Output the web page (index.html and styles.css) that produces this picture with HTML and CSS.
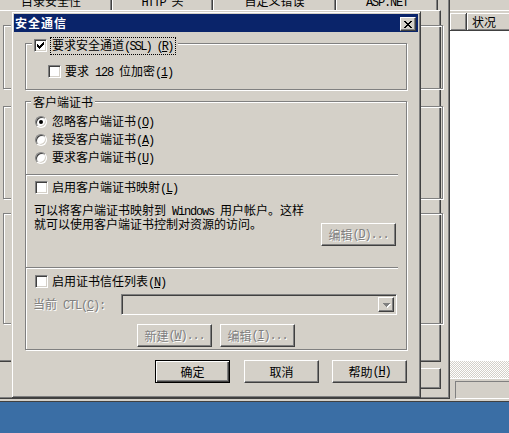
FILE: index.html
```html
<!DOCTYPE html>
<html lang="zh-CN">
<head>
  <meta charset="UTF-8">
  <title>安全通信</title>
  <link rel="stylesheet" href="styles.css">
</head>
<body>
<div class="desktop">

  <!-- IIS manager window behind -->
  <div class="mmc">
    <div class="mmc-pane">
      <div class="mmc-top"></div>
      <div class="lv-head">
        <div class="lv-col first"></div>
        <div class="lv-col state">状况</div>
      </div>
      <div class="lv-body"></div>
      <div class="lv-hatch"></div>
      <div class="statusbar">
        <div class="sb-panel"></div>
      </div>
    </div>
  </div>

  <!-- property sheet behind -->
  <div class="sheet">
    <div class="tabs">
      <div class="tab t1">目录安全性</div>
      <div class="tab t2"><span class="lat">HTTP </span>头</div>
      <div class="tab t3">自定义错误</div>
      <div class="tab t4"><span class="lat">ASP.NET</span></div>
    </div>
    <div class="page">
      <div class="pgroup pg1"></div>
      <div class="pgroup pg2"></div>
      <div class="pgroup pg3"></div>
    </div>
    <div class="sheet-btns">
      <div class="btn small">应用</div>
    </div>
  </div>

  <!-- Secure communications dialog -->
  <div class="dialog">
    <div class="titlebar">
      <span class="title">安全通信</span>
      <div class="close">
        <svg width="8" height="7" viewBox="0 0 8 7" shape-rendering="crispEdges"><path d="M0 0h2v1H0zM6 0h2v1H6zM1 1h2v1H1zM5 1h2v1H5zM2 2h4v1H2zM3 3h2v1H3zM2 4h4v1H2zM1 5h2v1H1zM5 5h2v1H5zM0 6h2v1H0zM6 6h2v1H6z" fill="#000"/></svg>
      </div>
    </div>

    <div class="dlg-body">
      <div class="group g-ssl">
        <div class="legend">
          <span class="cb">
            <svg width="7" height="7" viewBox="0 0 7 7" shape-rendering="crispEdges"><path d="M6 0h1v1H6zM5 1h2v1H5zM0 2h1v1H0zM4 2h3v1H4zM0 3h2v1H0zM3 3h3v1H3zM0 4h5v1H0zM1 5h3v1H1zM2 6h1v1H2z" fill="#000"/></svg>
          </span>
          <span class="focus">要求安全通道<span class="lat tight">(SSL) (<u>R</u>)</span></span>
        </div>
        <div class="row r128">
          <span class="cb"></span>
          <span class="lbl">要求<span class="lat"> 128 </span>位加密<span class="lat">(<u>1</u>)</span></span>
        </div>
      </div>

      <div class="group g-client">
        <div class="legend">客户端证书</div>
        <div class="opt first"><span class="rb on"></span><span class="lbl">忽略客户端证书<span class="lat">(<u>O</u>)</span></span></div>
        <div class="opt"><span class="rb"></span><span class="lbl">接受客户端证书<span class="lat">(<u>A</u>)</span></span></div>
        <div class="opt"><span class="rb"></span><span class="lbl">要求客户端证书<span class="lat">(<u>U</u>)</span></span></div>

        <div class="sep"></div>
        <div class="row r-map">
          <span class="cb"></span>
          <span class="lbl">启用客户端证书映射<span class="lat">(<u>L</u>)</span></span>
        </div>
        <p class="note">可以将客户端证书映射到<span class="lat"> Windows </span>用户帐户。这样<br>就可以使用客户端证书控制对资源的访问。</p>
        <div class="btn dis btn-map">编辑<span class="lat"> (<u>D</u>)...</span></div>

        <div class="sep sep2"></div>
        <div class="row r-ctl">
          <span class="cb"></span>
          <span class="lbl">启用证书信任列表<span class="lat">(<u>N</u>)</span></span>
        </div>
        <div class="ctl-row">
          <span class="ctl-label dis">当前<span class="lat"> CTL(<u>C</u>):</span></span>
          <div class="combo">
            <div class="combo-btn">
              <svg width="7" height="4" viewBox="0 0 7 4" shape-rendering="crispEdges"><path d="M0 0h7v1H0zM1 1h5v1H1zM2 2h3v1H2zM3 3h1v1H3z" fill="#808080"/></svg>
            </div>
          </div>
        </div>
        <div class="ctl-buttons">
          <div class="btn dis">新建<span class="lat"> (<u>W</u>)...</span></div>
          <div class="btn dis">编辑<span class="lat"> (<u>I</u>)...</span></div>
        </div>
      </div>

      <div class="dlg-buttons">
        <div class="btn default ok">确定</div>
        <div class="btn cancel">取消</div>
        <div class="btn">帮助<span class="lat"> (<u>H</u>)</span></div>
      </div>
    </div>
  </div>

</div>
</body>
</html>
```

FILE: styles.css
```css
* {
  box-sizing: border-box;
}

body {
  margin: 0;
  background: #3a6ea5;
  font-family: "Noto Sans CJK SC", sans-serif;
  font-size: 12px;
  line-height: 12px;
  color: #000;
  white-space: nowrap;
}

.desktop {
  position: relative;
  width: 509px;
  height: 433px;
  overflow: hidden;
}

.lat {
  font-family: "Liberation Mono", monospace;
  font-size: 12px;
  letter-spacing: -1.2px;
}

.lat.tight {
  letter-spacing: -1.8px;
}

u {
  text-underline-offset: 1px;
}

/* raised button look */
.btn {
  width: 75px;
  height: 23px;
  display: flex;
  align-items: center;
  justify-content: center;
  background: #d4d0c8;
  border: 1px solid;
  border-color: #fff #404040 #404040 #fff;
  box-shadow: inset -1px -1px #808080;
  flex: none;
}

.btn.default {
  border-color: #000;
  box-shadow: inset 1px 1px #fff, inset -1px -1px #404040, inset -2px -2px #808080;
}

.dis {
  color: #808080;
  text-shadow: 1px 1px 0 #fff;
}

/* MMC window */
.mmc {
  position: absolute;
  left: -10px;
  top: -10px;
  width: 530px;
  height: 412px;
  padding: 0 0 2px 460px;
  background: #d4d0c8;
  border-bottom: 1px solid #404040;
  display: flex;
}

.mmc-pane {
  flex: 1;
  display: flex;
  flex-direction: column;
}

.mmc-top {
  height: 23px;
  background: linear-gradient(#fff, #fff) 0 20px / 100% 1px no-repeat;
}

.lv-head {
  height: 18px;
  display: flex;
}

.lv-col {
  height: 18px;
  border-right: 1px solid #404040;
  border-bottom: 1px solid #404040;
  box-shadow: inset 1px 1px #fff, inset -1px -1px #808080;
  padding: 3px 0 0 5px;
}

.lv-col.first {
  width: 17px;
}

.lv-col.state {
  flex: 1;
}

.lv-body {
  height: 330px;
  background: #fff;
}

.lv-hatch {
  height: 17px;
  background: repeating-conic-gradient(#fff 0 25%, #d4d0c8 0 50%) 0 0 / 2px 2px;
}

.statusbar {
  height: 21px;
  border-top: 1px solid #fff;
  padding: 2px 0 0 5px;
  display: flex;
}

.sb-panel {
  flex: 1;
  border: 1px solid;
  border-color: #808080 #fff #fff #808080;
}

/* property sheet */
.sheet {
  position: absolute;
  left: -20px;
  top: -20px;
  width: 470px;
  height: 419px;
  padding: 0 8px 0 10px;
  background: #d4d0c8;
  border-right: 1px solid #404040;
  border-bottom: 1px solid #404040;
  box-shadow: inset -1px -1px #808080;
}

.tabs {
  height: 30px;
  display: flex;
  align-items: flex-end;
}

.tab {
  height: 19px;
  padding-top: 4px;
  text-align: center;
  border-left: 1px solid #fff;
  border-right: 1px solid #404040;
  box-shadow: inset -1px 0 #808080;
}

.tab.t1 { width: 122px; height: 21px; padding-top: 6px; }
.tab.t2 { width: 101px; }
.tab.t3 { width: 123px; }
.tab.t4 { width: 102px; }

.page {
  height: 352px;
  border: 1px solid;
  border-color: #fff #404040 #404040 #fff;
  box-shadow: inset -1px -1px #808080;
  padding-left: 12px;
  display: flex;
  flex-direction: column;
}

.pgroup {
  width: 440px;
  border: 1px solid #808080;
  box-shadow: inset 1px 1px #fff, 1px 1px #fff;
}

.pg1 { height: 64px; margin-top: 14px; }
.pg2 { height: 93px; margin-top: 17px; }
.pg3 { height: 111px; margin-top: 14px; }

.sheet-btns {
  display: flex;
  justify-content: flex-end;
  margin-top: 6px;
}

.btn.small {
  height: 21px;
}

/* dialog */
.dialog {
  position: absolute;
  left: 11px;
  top: 11px;
  width: 410px;
  height: 387px;
  padding: 2px;
  background: #d4d0c8;
  border: 1px solid;
  border-color: #d4d0c8 #404040 #404040 #d4d0c8;
  box-shadow: inset 1px 1px #fff, inset -1px -1px #808080;
}

.titlebar {
  height: 18px;
  background: #0a246a;
  display: flex;
  align-items: center;
  justify-content: space-between;
  padding: 0 2px 0 1px;
}

.title {
  color: #fff;
  font-weight: bold;
  letter-spacing: 1px;
}

.close {
  width: 16px;
  height: 14px;
  margin-top: 2px;
  display: flex;
  align-items: center;
  justify-content: center;
  background: #d4d0c8;
  border: 1px solid;
  border-color: #fff #404040 #404040 #fff;
  box-shadow: inset -1px -1px #808080;
}

.dlg-body {
  padding: 11px 11px 0;
  display: flex;
  flex-direction: column;
}

.group {
  width: 382px;
  border: 1px solid #808080;
  box-shadow: inset 1px 1px #fff, 1px 1px #fff;
  display: flex;
  flex-direction: column;
  align-items: flex-start;
}

.g-ssl {
  height: 47px;
}

.g-client {
  height: 249px;
  margin-top: 11px;
}

.legend {
  display: flex;
  align-items: center;
  background: #d4d0c8;
  padding: 0 2px;
}

.g-ssl .legend {
  height: 15px;
  margin: -6px 0 0 6px;
}

.g-client .legend {
  height: 13px;
  line-height: 13px;
  margin: -7px 0 0 5px;
}

.focus {
  margin-left: 3px;
  padding: 0 2px 0 1px;
  border: 1px dotted #000;
  line-height: 13px;
}

/* checkbox */
.cb {
  width: 13px;
  height: 13px;
  flex: none;
  display: flex;
  align-items: center;
  justify-content: center;
  background: #fff;
  border: 1px solid;
  border-color: #808080 #fff #fff #808080;
  box-shadow: inset 1px 1px #404040, inset -1px -1px #d4d0c8;
}

/* radio */
.rb {
  position: relative;
  width: 12px;
  height: 12px;
  flex: none;
  border-radius: 50%;
  background: #fff;
  border: 1px solid;
  border-color: #808080 #fff #fff #808080;
  box-shadow: inset 1px 1px #404040, inset -1px -1px #d4d0c8;
}

.rb.on::after {
  content: "";
  position: absolute;
  left: 3px;
  top: 3px;
  width: 4px;
  height: 4px;
  border-radius: 50%;
  background: #000;
}

.row {
  display: flex;
  align-items: center;
  height: 13px;
  margin-left: 9px;
}

.row .lbl {
  margin-left: 4px;
}

.r128 {
  margin: 12px 0 0 22px;
}

.opt {
  display: flex;
  align-items: center;
  height: 18px;
  margin-left: 9px;
}

.opt.first {
  margin-top: 5px;
}

.opt .lbl {
  margin-left: 5px;
}

.sep {
  width: 372px;
  height: 2px;
  margin-top: 7px;
  border-top: 1px solid #808080;
  border-bottom: 1px solid #fff;
}

.sep.sep2 {
  margin-top: 21px;
}

.r-map {
  margin-top: 5px;
}

.note {
  margin: 10px 0 0 8px;
  line-height: 12px;
}

.btn-map {
  align-self: flex-end;
  margin: -7px 10px 0 0;
}

.r-ctl {
  margin-top: 6px;
}

.ctl-row {
  display: flex;
  align-items: center;
  height: 21px;
  margin-top: 6px;
}

.ctl-label {
  width: 88px;
  margin-left: 7px;
}

.combo {
  width: 276px;
  height: 21px;
  padding: 2px;
  display: flex;
  justify-content: flex-end;
  background: #d4d0c8;
  border: 1px solid;
  border-color: #808080 #fff #fff #808080;
  box-shadow: inset 1px 1px #404040, inset -1px -1px #d4d0c8;
}

.combo-btn {
  width: 16px;
  height: 15px;
  display: flex;
  align-items: center;
  justify-content: center;
  border: 1px solid;
  border-color: #fff #404040 #404040 #fff;
  box-shadow: inset -1px -1px #808080;
}

.combo-btn svg {
  filter: drop-shadow(1px 1px 0 #fff);
}

.ctl-buttons {
  display: flex;
  gap: 8px;
  margin: 9px 0 0 111px;
}

.dlg-buttons {
  display: flex;
  justify-content: flex-end;
  margin-top: 10px;
}

.ok {
  margin-right: 14px;
}

.cancel {
  margin-right: 13px;
}
```
